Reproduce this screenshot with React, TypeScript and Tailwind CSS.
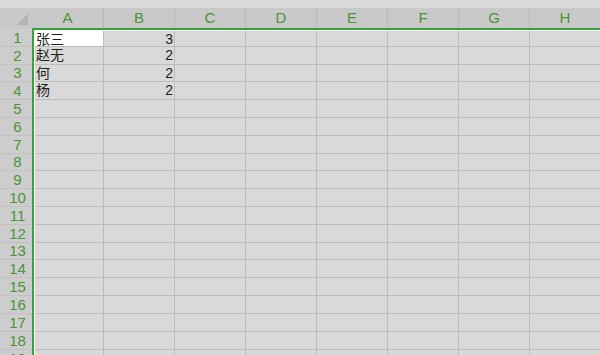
const cols = ["A", "B", "C", "D", "E", "F", "G", "H"]

// row heights (px, line included) – the sheet is drawn at a ~17.8px pitch
const rowH = [
  "h-[18px]", "h-[18px]", "h-[17px]", "h-[18px]", "h-[18px]", "h-[18px]",
  "h-[18px]", "h-[17px]", "h-[18px]", "h-[18px]", "h-[18px]", "h-[18px]",
  "h-[17px]", "h-[18px]", "h-[18px]", "h-[18px]", "h-[18px]", "h-[18px]",
  "h-[18px]",
]

const data: Record<number, [string, string]> = {
  0: ["张三", "3"],
  1: ["赵无", "2"],
  2: ["何", "2"],
  3: ["杨", "2"],
}

const font = "font-['Liberation_Sans','Noto_Sans_CJK_SC',sans-serif]"

export default function App() {
  return (
    <div className={`w-[600px] h-[355px] overflow-hidden bg-[#d9d9d9] ${font}`}>
      <div className="h-[8px] bg-[#dbdbdb]" />

      {/* column headers */}
      <div className="flex h-[20px] bg-[#c9c9c9]">
        <div className="relative w-[32px] shrink-0">
          <svg className="absolute right-[4px] bottom-[3px]" width="11" height="12" viewBox="0 0 11 12">
            <polygon points="11,0 11,12 0,12" fill="#b4b4b4" />
          </svg>
        </div>
        {cols.map((c, i) => (
          <div
            key={c}
            className={`shrink-0 border-r border-[#b9b9b9] text-center text-[15px] leading-[20px] text-[#4a9439] ${i === 0 ? "w-[72px]" : "w-[71px]"}`}
          >
            {c}
          </div>
        ))}
      </div>

      <div className="flex">
        {/* row headers */}
        <div className="w-[32px] shrink-0 bg-[#cdcdcd]">
          {rowH.map((h, r) => (
            <div
              key={r}
              className={`${r === 0 ? "h-[19px]" : h} border-b border-[#c2c2c2] flex items-end justify-center pl-[3px] text-[15px] leading-[17px] text-[#4a9439]`}
            >
              {r + 1}
            </div>
          ))}
        </div>

        {/* selected grid */}
        <div className="border-l-2 border-t-2 border-[#36a33c]">
          <div className="border-l border-t border-white">
            {rowH.map((h, r) => (
              <div key={r} className={`flex ${r === 0 ? "h-[16px]" : h}`}>
                {cols.map((c, i) => (
                  <div
                    key={c}
                    className={`shrink-0 border-r border-b border-[#bcbcbc] overflow-hidden whitespace-nowrap text-[14px] leading-[16px] text-[#1e1e1e] ${i === 0 ? "w-[69px] pl-[1px]" : "w-[71px]"} ${i === 1 ? "text-right pr-[1px]" : ""} ${r === 0 && i === 0 ? "bg-white" : ""}`}
                  >
                    {i < 2 && data[r] ? data[r][i] : ""}
                  </div>
                ))}
              </div>
            ))}
          </div>
        </div>
      </div>
    </div>
  )
}
